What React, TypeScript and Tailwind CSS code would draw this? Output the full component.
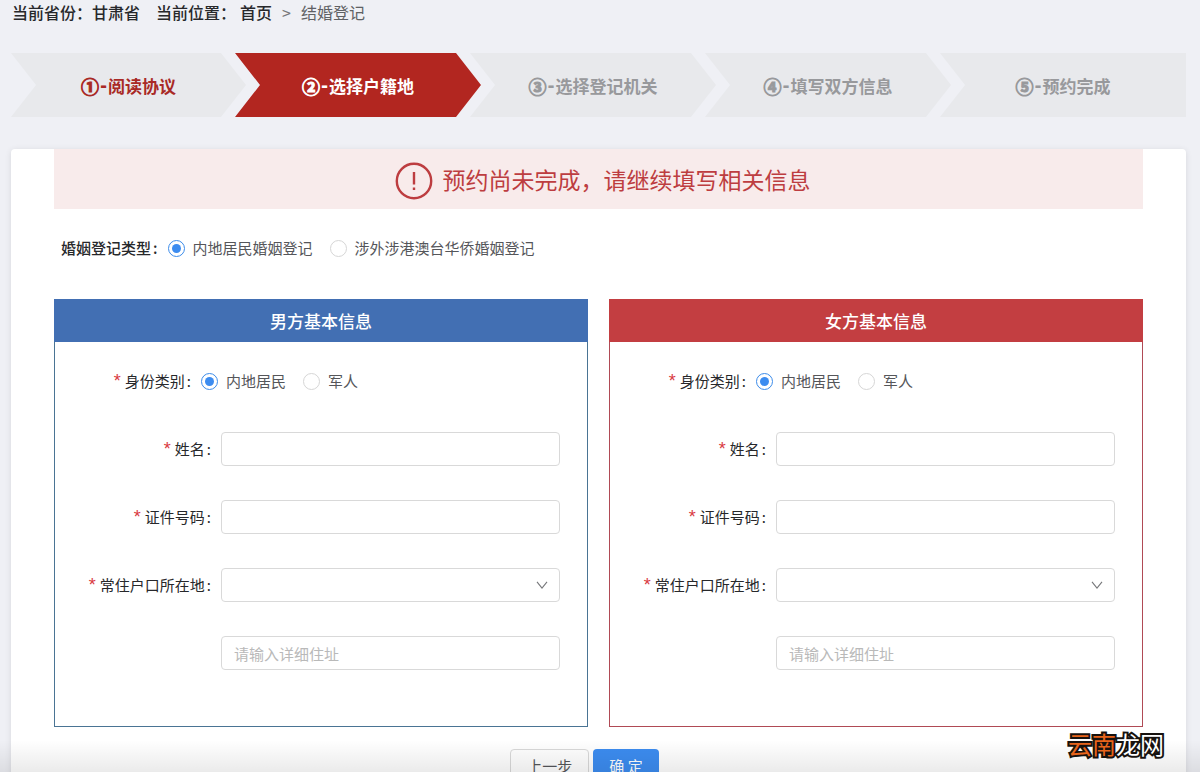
import React from "react";
import clsx from "clsx";

const steps = [
  { mark: "①", label: "阅读协议" },
  { mark: "②", label: "选择户籍地" },
  { mark: "③", label: "选择登记机关" },
  { mark: "④", label: "填写双方信息" },
  { mark: "⑤", label: "预约完成" },
];
const currentStep = 1;

const stepShape = (index: number) => {
  if (index === steps.length - 1) {
    return "[clip-path:polygon(0_0,100%_0,100%_100%,0_100%,25px_50%)]";
  }
  return "[clip-path:polygon(0_0,calc(100%-25px)_0,100%_50%,calc(100%-25px)_100%,0_100%,25px_50%)]";
};

const Breadcrumb = () => (
  <header className="flex h-6 items-center px-3 text-base leading-6 font-medium text-[#27282b]">
    <span>当前省份：甘肃省</span>
    <span className="ml-4">当前位置：</span>
    <nav className="ml-1 flex items-center">
      <a href="#home">首页</a>
      <span className="mx-2.5 font-normal text-[#77787b]">&gt;</span>
      <span className="font-normal text-[#606164]">结婚登记</span>
    </nav>
  </header>
);

const Steps = () => (
  <ol className="mt-[29px] grid grid-cols-5">
    {steps.map((step, index) => (
      <li
        key={step.mark}
        className={clsx(
          "flex h-16 items-center justify-center pt-0.5 text-[17px] leading-6 font-bold whitespace-nowrap",
          stepShape(index),
          index > 0 && "-ml-[11px]",
          index < currentStep && "bg-[#e8e9ec] text-[#a92a26]",
          index === currentStep && "bg-[#b22620] text-white",
          index > currentStep && "bg-[#e8e9ec] text-[#98999c]"
        )}
      >
        <span className="text-lg leading-6 [-webkit-text-stroke:1px_currentColor]">{step.mark}</span>
        <span className="mx-px font-['DejaVu_Sans',sans-serif]">-</span>
        {step.label}
      </li>
    ))}
  </ol>
);

type RadioProps = {
  name: string;
  label: string;
  checked: boolean;
  onChange: () => void;
};

const Radio = ({ name, label, checked, onChange }: RadioProps) => (
  <label className="flex items-center gap-2 whitespace-nowrap text-[#55565a]">
    <input
      type="radio"
      name={name}
      checked={checked}
      onChange={onChange}
      className="grid size-[17px] appearance-none place-content-center rounded-full border border-[#d6d6d6] bg-white checked:border-[#3c8cea] checked:before:size-[9px] checked:before:rounded-full checked:before:bg-[#3c8cf0] checked:before:content-['']"
    />
    {label}
  </label>
);

type RadioGroupProps = {
  name: string;
  options: string[];
};

const RadioGroup = ({ name, options }: RadioGroupProps) => {
  const [selected, setSelected] = React.useState(options[0]);

  return (
    <div className="flex items-center gap-[17px]">
      {options.map((option) => (
        <Radio
          key={option}
          name={name}
          label={option}
          checked={selected === option}
          onChange={() => setSelected(option)}
        />
      ))}
    </div>
  );
};

const FieldText = ({ children }: { children: string }) => (
  <>
    <span className="mr-1 font-['Liberation_Sans',sans-serif] text-lg leading-4 text-[#d93a3f]">*</span>
    {children}
    <span className="mr-2.5 ml-0.5">:</span>
  </>
);

const fieldClass =
  "h-[34px] w-full appearance-none rounded border border-[#d9d9d9] bg-white px-3 text-[15px] text-[#55565a] placeholder:text-[#b9b9b9] focus:border-[#3c8cea] focus:outline-none";
const labelClass = "w-[166px] shrink-0 text-right whitespace-nowrap";

type PersonPanelProps = {
  id: string;
  title: string;
  borderClass: string;
  headerClass: string;
};

const PersonPanel = ({ id, title, borderClass, headerClass }: PersonPanelProps) => (
  <section className={clsx("border border-t-0 pb-14", borderClass)}>
    <h2 className={clsx("-mx-px h-[43px] text-center text-[17px] leading-[43px] font-medium text-white", headerClass)}>
      {title}
    </h2>
    <div className="mt-[22px] flex flex-col gap-[34px] pr-[27px]">
      <div role="radiogroup" aria-labelledby={`${id}-kind`} className="flex h-[34px] items-center">
        <span id={`${id}-kind`} className="w-[146px] shrink-0 text-right whitespace-nowrap">
          <FieldText>身份类别</FieldText>
        </span>
        <RadioGroup name={`${id}-kind`} options={["内地居民", "军人"]} />
      </div>
      <div className="flex items-center">
        <label htmlFor={`${id}-name`} className={labelClass}>
          <FieldText>姓名</FieldText>
        </label>
        <input id={`${id}-name`} type="text" className={fieldClass} />
      </div>
      <div className="flex items-center">
        <label htmlFor={`${id}-card`} className={labelClass}>
          <FieldText>证件号码</FieldText>
        </label>
        <input id={`${id}-card`} type="text" className={fieldClass} />
      </div>
      <div className="flex items-center">
        <label htmlFor={`${id}-region`} className={labelClass}>
          <FieldText>常住户口所在地</FieldText>
        </label>
        <div className="relative w-full">
          <select id={`${id}-region`} className={fieldClass} />
          <svg
            viewBox="0 0 12 8"
            className="pointer-events-none absolute top-[13px] right-3 h-2 w-3 fill-none stroke-[#77787b]"
          >
            <path d="M1 0.8L6 7L11 0.8" strokeWidth="1.1" />
          </svg>
        </div>
      </div>
      <div className="flex items-center pl-[166px]">
        <input type="text" aria-label="详细住址" placeholder="请输入详细住址" className={fieldClass} />
      </div>
    </div>
  </section>
);

const App = () => {
  return (
    <div className="relative h-screen overflow-hidden bg-[#eff0f5] font-['Noto_Sans_CJK_SC',sans-serif] text-[15px] leading-6 text-[#27282b]">
      <Breadcrumb />
      <div className="mr-[14px] ml-[11px]">
        <Steps />
        <main className="mt-8 rounded-t-sm bg-white px-[43px] pb-8 shadow-[0_1px_6px_rgba(0,0,0,0.1)]">
          <div
            role="alert"
            className="flex h-[60px] items-center justify-center gap-2.5 bg-[#f8ebeb] pl-2 text-[#bd3d40]"
          >
            <svg viewBox="0 0 38 38" className="mt-1 size-[38px] fill-none stroke-current">
              <circle cx="19" cy="19" r="17.2" strokeWidth="2.4" />
              <path d="M19 10V22.5M19 25.5V28" strokeWidth="2.4" />
            </svg>
            <p className="text-[23px] leading-8">预约尚未完成，请继续填写相关信息</p>
          </div>

          <div role="radiogroup" aria-labelledby="register-type" className="mt-[22px] ml-[7px] flex h-[34px] items-center">
            <span id="register-type" className="font-medium">
              婚姻登记类型
              <span className="mr-2.5 ml-0.5">:</span>
            </span>
            <RadioGroup name="register-type" options={["内地居民婚姻登记", "涉外涉港澳台华侨婚姻登记"]} />
          </div>

          <form className="mt-[34px]" onSubmit={(e) => e.preventDefault()}>
            <div className="grid grid-cols-2 gap-[21px]">
              <PersonPanel id="male" title="男方基本信息" borderClass="border-[#4a7494]" headerClass="bg-[#426fb3]" />
              <PersonPanel id="female" title="女方基本信息" borderClass="border-[#b04a55]" headerClass="bg-[#c33e41]" />
            </div>
            <div className="mt-[22px] mr-7 flex justify-center gap-1">
              <button type="button" className="h-[34px] rounded border border-[#d9d9d9] bg-white px-4 text-[#55565a]">
                上一步
              </button>
              <button type="submit" className="h-[34px] rounded bg-[#3c8cf0] px-4 text-white">
                确 定
              </button>
            </div>
          </form>
        </main>
      </div>

      <div className="pointer-events-none absolute inset-x-0 bottom-0 h-8 bg-linear-to-b from-transparent to-black/8" />
      <div className="absolute right-9 bottom-3 text-2xl leading-8 text-white [paint-order:stroke_fill] [-webkit-text-stroke:4px_#17120f]">
        <span className="text-[#e8641b]">云南</span>龙网
      </div>
    </div>
  );
};

export default App;
